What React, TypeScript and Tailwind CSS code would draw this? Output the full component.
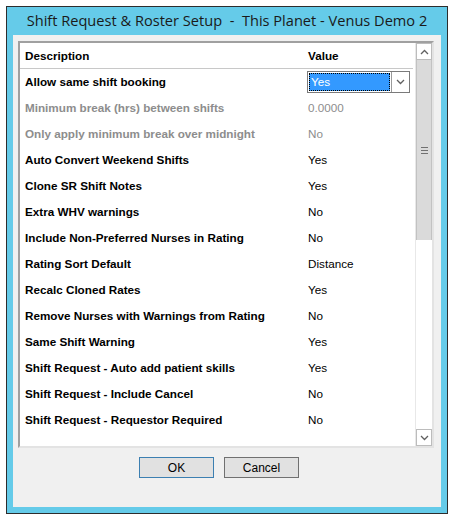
import React from "react";

type Row = { label: string; value: string; disabled?: boolean; combo?: boolean };

const rows: Row[] = [
  { label: "Allow same shift booking", value: "Yes", combo: true },
  { label: "Minimum break (hrs) between shifts", value: "0.0000", disabled: true },
  { label: "Only apply minimum break over midnight", value: "No", disabled: true },
  { label: "Auto Convert Weekend Shifts", value: "Yes" },
  { label: "Clone SR Shift Notes", value: "Yes" },
  { label: "Extra WHV warnings", value: "No" },
  { label: "Include Non-Preferred Nurses in Rating", value: "No" },
  { label: "Rating Sort Default", value: "Distance" },
  { label: "Recalc Cloned Rates", value: "Yes" },
  { label: "Remove Nurses with Warnings from Rating", value: "No" },
  { label: "Same Shift Warning", value: "Yes" },
  { label: "Shift Request - Auto add patient skills", value: "Yes" },
  { label: "Shift Request - Include Cancel", value: "No" },
  { label: "Shift Request - Requestor Required", value: "No" },
];

function Chevron({ up }: { up?: boolean }) {
  return (
    <svg width="9" height="6" viewBox="0 0 9 6">
      <path
        d={up ? "M1 5 L4.5 1.5 L8 5" : "M1 1 L4.5 4.5 L8 1"}
        fill="none"
        stroke="#606060"
        strokeWidth="1.3"
      />
    </svg>
  );
}

export default function App() {
  return (
    <div className="w-[458px] h-[526px] bg-white pl-[6px] pt-[6px] font-['Liberation_Sans',sans-serif]">
      {/* Window */}
      <div className="w-[442px] h-[508px] border border-[#2d2d2d] bg-[#65cbe9] flex flex-col">
        <div className="h-[28px] flex items-center justify-center text-[14.6px] text-[#1a1a1a] font-['Open_Sans',sans-serif] whitespace-pre">
          Shift Request &amp; Roster Setup  -  This Planet - Venus Demo 2
        </div>

        {/* Client area */}
        <div className="mx-[6px] mb-[6px] flex-1 bg-[#f0f0f0] pl-[5px] pr-[7px] pt-[6px] flex flex-col">
          {/* List */}
          <div className="h-[407px] border-2 border-t-[#a0a0a0] border-l-[#a0a0a0] border-b-[#e3e3e3] border-r-[#e3e3e3] bg-white flex">
            <div className="flex-1 flex flex-col text-[11.7px]">
              <div className="h-[26px] flex items-center font-bold text-black border-b border-[#c8c8c8] mr-[2px]">
                <div className="w-[283px] pl-[5px]">Description</div>
                <div className="pl-[5px]">Value</div>
              </div>
              {rows.map((r, i) => (
                <div key={i} className="h-[26px] flex items-center">
                  <div
                    className={`w-[283px] pl-[5px] font-bold whitespace-nowrap ${
                      r.disabled ? "text-[#8d8d8d]" : "text-black"
                    }`}
                  >
                    {r.label}
                  </div>
                  {r.combo ? (
                    <div className="ml-[4px] -mt-[1px] w-[103px] h-[22px] border border-[#7a7a7a] flex">
                      <div className="flex-1 m-[1px] bg-[#3399ff] border border-dotted border-black text-white flex items-center pl-[1px]">
                        {r.value}
                      </div>
                      <div className="w-[18px] border-l border-[#9a9a9a] bg-white flex items-center justify-center">
                        <Chevron />
                      </div>
                    </div>
                  ) : (
                    <div className={`pl-[5px] ${r.disabled ? "text-[#8d8d8d]" : "text-black"}`}>
                      {r.value}
                    </div>
                  )}
                </div>
              ))}
            </div>

            {/* Scrollbar */}
            <div className="w-[17px] flex flex-col border-l border-[#e8e8e8] bg-white">
              <div className="h-[17px] border border-[#bcbcbc] flex items-center justify-center bg-white">
                <Chevron up />
              </div>
              <div className="h-[180px] bg-[#dadada] border-x border-[#c2c2c2] flex items-center justify-center">
                <div className="flex flex-col gap-[2px]">
                  <div className="w-[7px] h-[1px] bg-[#707070]" />
                  <div className="w-[7px] h-[1px] bg-[#707070]" />
                  <div className="w-[7px] h-[1px] bg-[#707070]" />
                </div>
              </div>
              <div className="flex-1" />
              <div className="h-[17px] border border-[#bcbcbc] flex items-center justify-center bg-white">
                <Chevron />
              </div>
            </div>
          </div>

          {/* Buttons */}
          <div className="mt-[9px] flex gap-[10px] pl-[121px] text-[12px]">
            <button className="w-[75px] h-[21px] bg-[#e1e1e1] border border-[#3c7fb1] text-black">
              OK
            </button>
            <button className="w-[75px] h-[21px] bg-[#e1e1e1] border border-[#707070] text-black">
              Cancel
            </button>
          </div>
        </div>
      </div>
    </div>
  );
}
